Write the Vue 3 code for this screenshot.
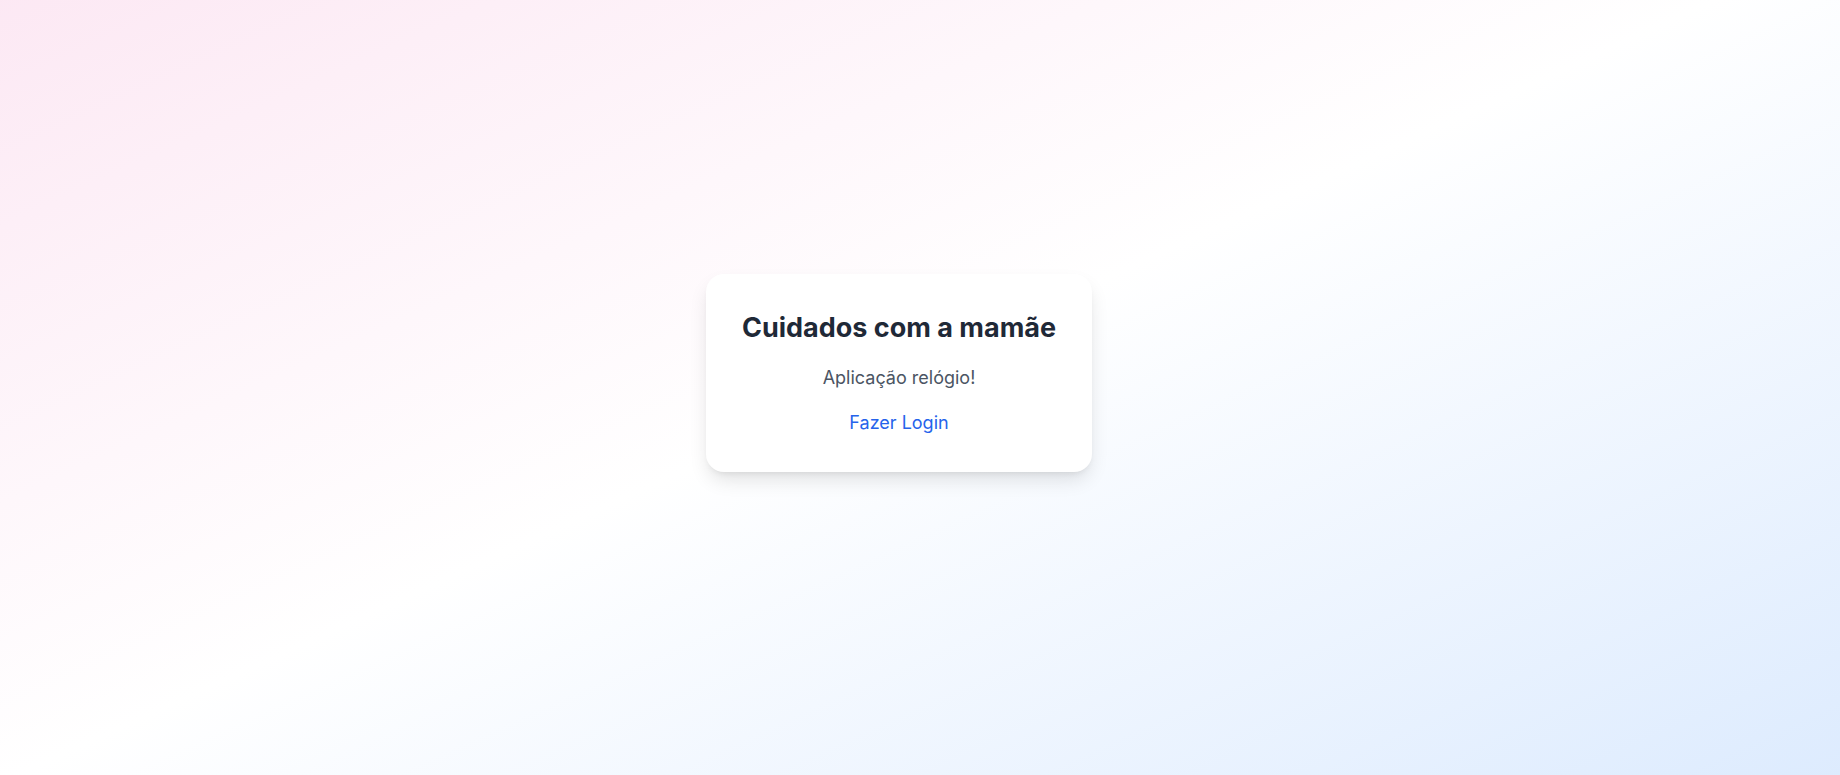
<script setup>
const title = 'Cuidados com a mamãe'
const subtitle = 'Aplicação relógio!'
</script>

<template>
  <main class="page">
    <section class="card">
      <h1 class="title">{{ title }}</h1>
      <p class="subtitle">{{ subtitle }}</p>
      <a class="login" href="/login">Fazer Login</a>
    </section>
  </main>
</template>

<style>
body {
  margin: 0;
}
</style>

<style scoped>
.page {
  min-height: 100vh;
  display: flex;
  align-items: center;
  justify-content: center;
  box-sizing: border-box;
  padding-right: 42px;
  padding-bottom: 30px;
  background: linear-gradient(155.5deg, #fce7f3 -3%, #ffffff 48.5%, #dbeafe 103%);
  font-family: Inter, "Liberation Sans", sans-serif;
}

.card {
  display: flex;
  flex-direction: column;
  align-items: center;
  gap: 18px;
  padding: 36px;
  border-radius: 18px;
  background: #ffffff;
  text-align: center;
  box-shadow: 0 10px 20px -3px rgba(0, 0, 0, 0.12), 0 4px 7px -4px rgba(0, 0, 0, 0.1);
}

.title {
  margin: 0;
  font-size: 27px;
  line-height: 36px;
  font-weight: 700;
  color: #1f2937;
}

.subtitle {
  margin: 0;
  font-size: 18px;
  line-height: 27px;
  color: #4b5563;
}

.login {
  font-size: 18px;
  line-height: 27px;
  color: #2563eb;
  text-decoration: none;
}

.login:hover {
  text-decoration: underline;
}
</style>
